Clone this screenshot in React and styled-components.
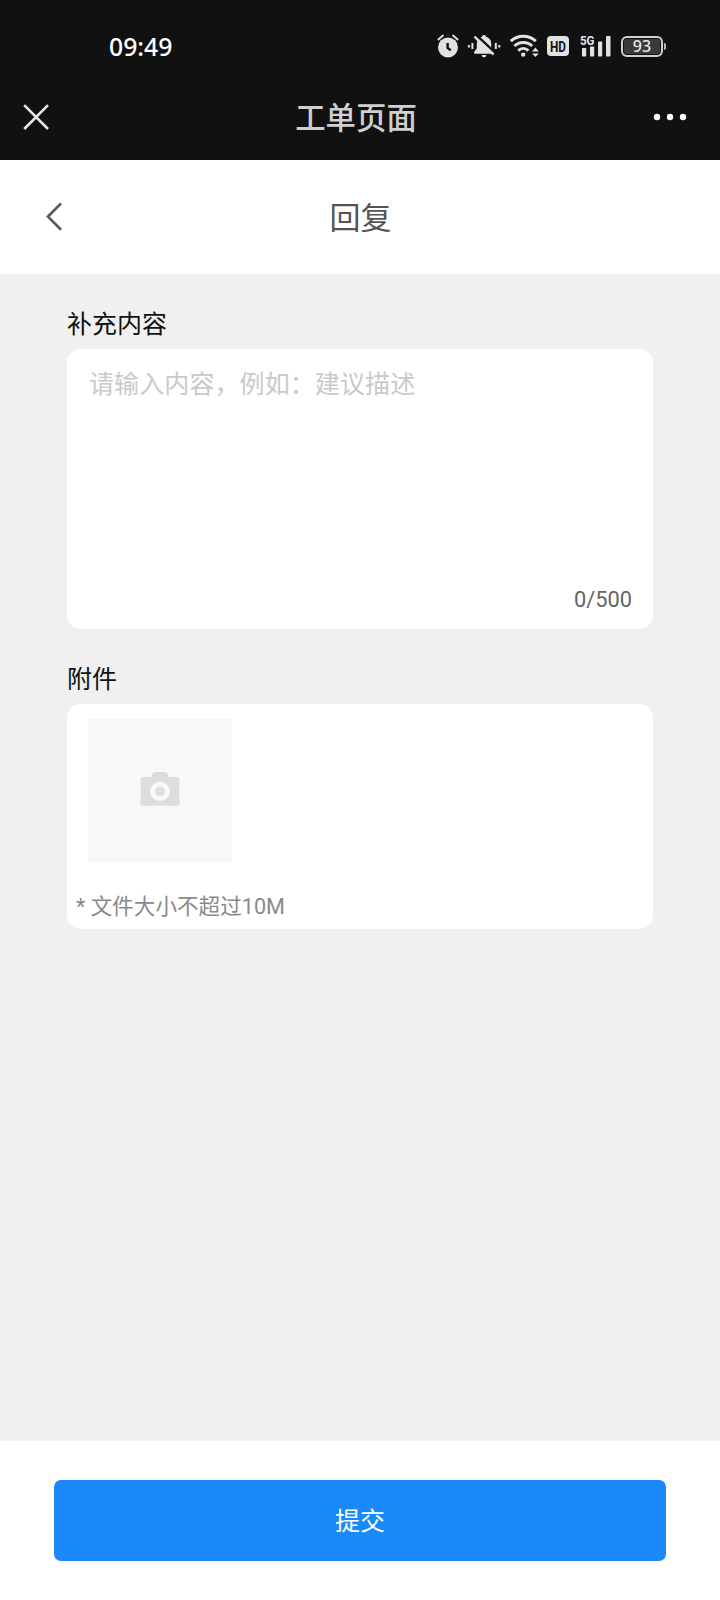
import React from "react";
import { useState } from "react";
import styled, { createGlobalStyle } from "styled-components";

const MAX_LENGTH = 500;

//============
// status bar icons
//============
const AlarmIcon = () => (
	<svg width="22" height="24" viewBox="0 0 22 24" fill="none">
		<circle cx="11" cy="13.4" r="10" fill="#e2e2e2" />
		<path d="M1.4 5.4 6 1.6M20.6 5.4 16 1.6" stroke="#e2e2e2" strokeWidth="2" strokeLinecap="round" />
		<path d="M10.6 9V14L13.8 16.4" stroke="#111" strokeWidth="2.4" />
	</svg>
);

const MutedBellIcon = () => (
	<svg width="35" height="24" viewBox="0 0 35 24" fill="none">
		<path
			d="M17 1c1.2 0 2 .7 2 1.8 3.3.8 5.2 3.4 5.2 6.6v5.2l2.600 3.200v2H7.200v-2l2.600-3.200V9.400c0-3.200 1.900-5.800 5.200-6.600C15 1.700 15.800 1 17 1z"
			fill="#e2e2e2"
		/>
		<path d="M14.600 21h4.800c-.2 1.500-1.100 2.300-2.400 2.300s-2.200-.8-2.400-2.300z" fill="#e2e2e2" />
		<path d="M9 .8 29 19.400" stroke="#111" strokeWidth="2.4" />
		<path d="M7.400 2.600 26.600 20.600" stroke="#e2e2e2" strokeWidth="2.2" />
		<path d="M5.400 9v6M28.800 9v6M1.900 11v2.600M32.300 11v2.600" stroke="#e2e2e2" strokeWidth="2" />
	</svg>
);

const WifiIcon = () => (
	<svg width="29" height="24" viewBox="0 0 29 24" fill="none">
		<g stroke="#e2e2e2" strokeWidth="3">
			<path d="M.8 7.200C7.800.6 18.600.6 25.800 7.200" />
			<path d="M4.400 12c5-4.800 12.800-4.800 17.800 0" />
			<path d="M8.200 16.600c3-2.800 7.200-2.800 10.200 0" />
		</g>
		<circle cx="13.2" cy="20.6" r="2.2" fill="#e2e2e2" />
		<path d="M22 17.400 25.400 13.600 28.800 17.400zM22 19.400h6.800l-3.400 3.600z" fill="#e2e2e2" />
	</svg>
);

const HdIcon = () => (
	<svg width="22" height="20" viewBox="0 0 22 20">
		<rect width="22" height="20" rx="4" fill="#e2e2e2" />
		<text
			x="3"
			y="15.5"
			fill="#111"
			fontFamily="Roboto, sans-serif"
			fontSize="15.5"
			fontWeight="700"
			textLength="16"
			lengthAdjust="spacingAndGlyphs"
		>
			HD
		</text>
	</svg>
);

const SignalIcon = () => (
	<svg width="33" height="24" viewBox="0 0 33 24" fill="#e2e2e2">
		<text
			x="0"
			y="11"
			fontFamily="Roboto, sans-serif"
			fontSize="13"
			fontWeight="700"
			textLength="14.5"
			lengthAdjust="spacingAndGlyphs"
		>
			5G
		</text>
		<rect x="2" y="14" width="4.2" height="8.5" rx=".8" />
		<rect x="10" y="12.5" width="4.2" height="10" rx=".8" />
		<rect x="18" y="7.5" width="4.2" height="15" rx=".8" />
		<rect x="26" y="2" width="4.5" height="20.500" rx=".8" />
	</svg>
);

const CloseIcon = () => (
	<svg width="26" height="26" viewBox="0 0 26 26">
		<path d="M1.2 1.2 25 25M25 1.2 1.2 25" stroke="#e6e6e6" strokeWidth="2.6" />
	</svg>
);

const MoreIcon = () => (
	<svg width="34" height="8" viewBox="0 0 34 8" fill="#fff">
		<circle cx="4" cy="4" r="3.2" />
		<circle cx="17" cy="4" r="3.2" />
		<circle cx="30" cy="4" r="3.2" />
	</svg>
);

const BackIcon = () => (
	<svg width="18" height="30" viewBox="0 0 18 30" fill="none">
		<path d="M16 1.4 3 14.600 16 27.800" stroke="#5a5a5a" strokeWidth="2.7" />
	</svg>
);

const CameraIcon = () => (
	<svg width="40" height="36" viewBox="0 0 40 36">
		<path
			d="M3 6h7c1.200 0 1.600-.6 2-1.800C12.700 2 13.600 1 15.600 1h8.800c2 0 2.900 1 3.600 3.200.4 1.200.8 1.800 2 1.800h7c1.600 0 2.500.9 2.500 2.500v23.700c0 1.600-.9 2.500-2.500 2.500H3c-1.600 0-2.500-.9-2.500-2.500V8.500C.5 6.900 1.400 6 3 6z"
			fill="#dcdddf"
		/>
		<circle cx="20" cy="20.3" r="7.3" fill="none" stroke="#f7f9fb" strokeWidth="4.8" />
	</svg>
);

const App = () => {
	//============
	const [content, setContent] = useState("");
	//============
	return (
		<>
			<GlobalStyle />
			<StyledPage>
				<StatusBar>
					<Clock>09:49</Clock>
					<StatusIcons>
						<AlarmIcon />
						<MutedBellIcon />
						<WifiIcon />
						<NetworkIcons>
							<HdIcon />
							<SignalIcon />
						</NetworkIcons>
						<Battery>
							<BatteryBody>93</BatteryBody>
							<BatteryTip />
						</Battery>
					</StatusIcons>
				</StatusBar>
				<AppBar>
					<CloseIcon />
					<AppTitle>工单页面</AppTitle>
					<MoreIcon />
				</AppBar>
				<PageHeader>
					<BackIcon />
					<PageTitle>回复</PageTitle>
				</PageHeader>
				<Content>
					<Label>补充内容</Label>
					<TextCard>
						<TextInput
							placeholder="请输入内容，例如：建议描述"
							maxLength={MAX_LENGTH}
							value={content}
							onChange={(e) => setContent(e.target.value)}
						/>
						<Counter>
							{content.length}/{MAX_LENGTH}
						</Counter>
					</TextCard>
					<Label>附件</Label>
					<UploadCard>
						<UploadButton>
							<CameraIcon />
						</UploadButton>
						<Hint>* 文件大小不超过10M</Hint>
					</UploadCard>
				</Content>
				<Footer>
					<SubmitButton>提交</SubmitButton>
				</Footer>
			</StyledPage>
		</>
	);
};

export default App;

const GlobalStyle = createGlobalStyle`
	* {
		box-sizing: border-box;
	}
	body {
		margin: 0;
		font-family: Roboto, "Noto Sans CJK SC", sans-serif;
	}
	svg {
		display: block;
		flex-shrink: 0;
		overflow: visible;
	}
`;
const StyledPage = styled.div`
	display: flex;
	flex-direction: column;
	width: 720px;
	height: 1600px;
	background: #f0f0f0;
`;
const StatusBar = styled.div`
	display: flex;
	align-items: center;
	justify-content: space-between;
	height: 76px;
	padding: 16px 54px 0 109px;
	background: #111;
`;
const Clock = styled.span`
	padding-bottom: 1px;
	font: 500 24.8px/30px "Noto Sans", sans-serif;
	color: #fff;
`;
const StatusIcons = styled.div`
	display: flex;
	align-items: center;
	gap: 8px;
`;
const NetworkIcons = styled.div`
	display: flex;
	align-items: center;
	gap: 11px;
`;
const Battery = styled.div`
	display: flex;
	align-items: center;
	gap: 1px;
`;
const BatteryBody = styled.span`
	width: 42px;
	height: 21px;
	border: 2px solid #d0d0d0;
	border-radius: 6px;
	background: #3a3a3a;
	box-shadow: inset 0 0 0 1px #111;
	color: #e8e8e8;
	text-align: center;
	font: 500 16px/17px "Noto Sans", sans-serif;
`;
const BatteryTip = styled.span`
	width: 2px;
	height: 7px;
	border-radius: 0 2px 2px 0;
	background: #bbb;
`;
const AppBar = styled.div`
	display: grid;
	grid-template-columns: 34px 1fr 34px;
	align-items: center;
	height: 84px;
	padding: 0 33px 2px 23px;
	background: #111;
`;
const AppTitle = styled.h1`
	margin: 0;
	padding: 4px 0 0 2px;
	font-size: 30.4px;
	font-weight: 500;
	line-height: 40px;
	text-align: center;
	color: #cfcfcf;
`;
const PageHeader = styled.div`
	display: grid;
	grid-template-columns: 18px 1fr 18px;
	align-items: center;
	height: 114px;
	padding: 0 45px;
	background: #fff;
`;
const PageTitle = styled.h2`
	margin: 0;
	padding: 4px 0 0 1px;
	font-size: 31px;
	font-weight: 400;
	line-height: 40px;
	text-align: center;
	color: #555;
`;
const Content = styled.div`
	flex: 1;
	padding: 32px 67px 0;
`;
const Label = styled.div`
	height: 43px;
	font-size: 25px;
	line-height: 38px;
	color: #111;
`;
const Card = styled.div`
	display: flex;
	flex-direction: column;
	border-radius: 14px;
	background: #fff;
`;
const TextCard = styled(Card)`
	height: 280px;
	margin-bottom: 32px;
	padding: 17px 21px 13px 22px;
`;
const TextInput = styled.textarea`
	flex: 1;
	padding: 0;
	border: none;
	outline: none;
	resize: none;
	background: none;
	font: inherit;
	font-size: 25.1px;
	line-height: 38px;
	color: #333;
	&::placeholder {
		color: #c8c9cc;
		opacity: 1;
	}
`;
const Counter = styled.div`
	font-size: 21.8px;
	line-height: 32px;
	text-align: right;
	color: #646566;
`;
const UploadCard = styled(Card)`
	height: 224.5px;
	padding: 15px 21px 0;
`;
const UploadButton = styled.button`
	display: flex;
	align-items: center;
	justify-content: center;
	width: 144px;
	height: 143px;
	padding: 0 0 4px;
	border: none;
	background: #f7f8fa;
`;
const Hint = styled.div`
	margin: 29px 0 0 -12px;
	font-size: 21.6px;
	line-height: 32px;
	color: #8a8a8a;
`;
const Footer = styled.div`
	height: 159px;
	padding: 39px 54px;
	background: #fff;
`;
const SubmitButton = styled.button`
	display: block;
	width: 100%;
	height: 81px;
	padding: 0 0 3px;
	border: none;
	border-radius: 7px;
	background: #1989fa;
	font: inherit;
	font-size: 25px;
	color: #fff;
`;
